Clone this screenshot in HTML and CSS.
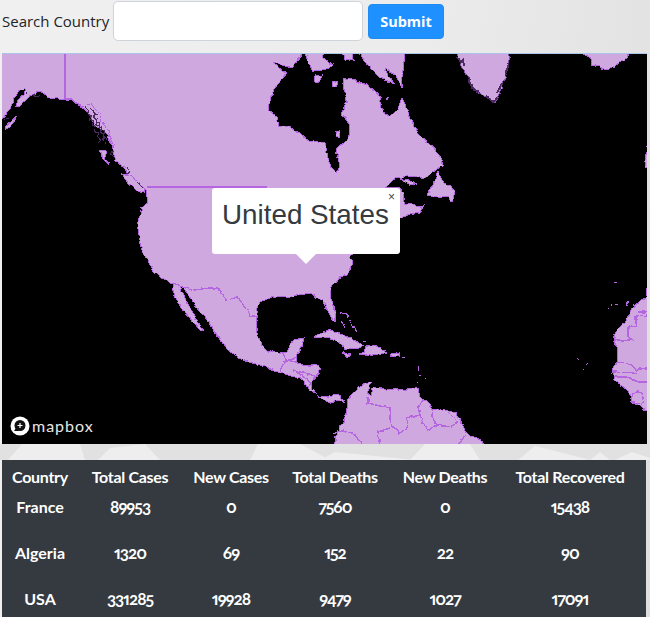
FILE: index.html
```html
<!DOCTYPE html>
<html lang="en">
<head>
    <meta charset="UTF-8">
    <meta name="viewport" content="width=device-width, initial-scale=1.0">
    <title>Covid Map</title>
    <link rel="stylesheet" href="styles.css">
</head>
<body>
    <form class="search">
        <label for="country">Search Country</label>
        <input type="text" id="country">
        <button type="button">Submit</button>
    </form>

    <div class="map">
        <svg class="land" viewBox="2 54 645 390" width="645" height="390">
            <defs>
                <filter id="rough" filterUnits="userSpaceOnUse" x="-10" y="40" width="680" height="420" color-interpolation-filters="sRGB">
                    <feTurbulence type="fractalNoise" baseFrequency="0.16" numOctaves="2" seed="4"/>
                    <feDisplacementMap in="SourceGraphic" scale="4" xChannelSelector="R" yChannelSelector="G"/>
                </filter>
            </defs>
            <g filter="url(#rough)">
            <!-- north america -->
            <path class="coast" d="M-8 44 L304 44 L302 54 L298 60 L292 68 L285 66 L273 62 L279 68 L287 73 L282 79 L276 86 L271 96 L268 110 L273 114 L277 116 L279 126 L286 126 L294 130 L301 134 L310 141 L325 143 L327 152 L328 160 L332 168 L337 173 L340 166 L338 158 L336 149 L344 143 L350 134 L349 124 L343 115 L342 112 L346 103 L347 95 L343 88 L343 80 L352 79 L367 85 L375 91 L380 97 L381 108 L385 113 L390 117 L397 110 L402 98 L408 112 L415 128 L420 136 L430 145 L436 150 L442 160 L442 166 L435 170 L424 178 L412 176 L394 178 L390 184 L385 187 L400 188 L403 192 L403 198 L405 204 L412 203 L417 207 L424 205 L420 212 L410 214 L402 217 L396 222 L390 235 L370 245 L350 255 L353 263 L347 273 L338 280 L331 287 L330 297 L334 306 L336 315 L334 322 L329 313 L322 300 L316 297 L310 293 L300 295 L290 297 L280 297 L270 298 L262 301 L258 305 L257 317 L256 325 L257 334 L262 345 L268 351 L278 353 L287 353 L290 345 L294 340 L303 338 L302 345 L297 353 L296 362 L303 365 L317 365 L321 369 L313 380 L311 388 L320 397 L329 396 L332 395 L340 394 L345 404 L341 400 L335 400 L332 404 L322 399 L315 393 L308 388 L300 377 L293 377 L280 372 L260 365 L245 361 L230 352 L223 343 L217 335 L205 317 L198 310 L192 300 L185 290 L180 285 L183 295 L190 308 L198 322 L204 330 L201 331 L193 322 L185 312 L178 303 L172 288 L172 283 L160 277 L153 270 L146 258 L141 248 L140 240 L138 230 L140 215 L142 208 L146 204 L147 198 L146 190 L140 188 L133 182 L127 172 L122 165 L115 160 L113 148 L108 135 L103 130 L95 125 L92 120 L88 112 L80 106 L73 100 L66 100 L50 98 L42 92 L36 93 L30 96 L20 106 L16 106 L18 100 L24 95 L25 89 L18 92 L12 104 L7 112 L4 118 L-8 122 Z"/>
            <!-- arctic and atlantic islands -->
            <path class="coast" d="M305 44 L305 54 L313 72 L330 68 L333 65 L323 57 L325 44 Z"/>
            <path class="coast" d="M342 44 L352 44 L354 60 L345 60 Z"/>
            <path class="coast" d="M357 44 L403 44 L403 70 L402 88 L398 80 L392 72 L385 68 L388 76 L395 84 L380 78 L372 70 L364 62 Z"/>
            <path class="coast" d="M315 76 L322 75 L320 81 L314 82 Z M333 81 L338 81 L336 87 L333 86 Z M335 131 L340 132 L339 137 L335 136 Z M386 97 L389 97 L387 100 Z"/>
            <path class="coast" d="M427 195 L433 184 L438 172 L441 178 L444 183 L451 186 L455 193 L452 202 L447 197 L440 197 L433 196 Z"/>
            <path class="coast" d="M400 179 L408 179 L415 184 L409 184 Z"/>
            <path class="coast dark" d="M458 44 L458 54 L462 68 L467 76 L472 88 L478 93 L487 96 L495 103 L498 96 L501 89 L505 78 L510 62 L507 44 Z"/>
            <path class="coast" d="M583 44 L583 54 L592 58 L591 65 L600 67 L607 70 L617 64 L627 58 L628 44 Z"/>
            <path class="coast" d="M656 146 L646 148 L647 156 L645 166 L656 170 Z"/>
            <!-- alaska and bc coast clutter -->
            <path class="coast" d="M6 130 L14 122 L16 116 L11 122 L5 127 Z"/>
            <path class="coast" d="M99 150 L106 150 L105 158 L109 165 L103 159 Z"/>
            <path class="coast" d="M122 174 L130 175 L136 180 L143 187 L144 192 L137 190 L128 183 Z"/>
            <path class="clutter" d="M85 107 l4 4 l-2 3 l5 2 l-3 4 l5 1 l-2 4 l5 2 l-3 4 l5 2 l-2 4 l4 3 l-3 3 M90 108 l5 5 l-2 4 l4 2 l-1 5 l6 3 l-2 5 l4 3 l-2 5 M93 112 l5 5 l-2 4 l4 2 l-1 5 l6 3 l-2 5 l4 3 l-2 5 M114 151 l-4 3 l5 3 M127 168 l3 4 l-4 1 M33 94 l4 3 l3 -2 M28 92 l-2 3 M5 120 l3 -2 M137 183 l6 5"/>
            <path class="wall" d="M86 104 l5 -1 l3 5 l6 6 l2 8 l5 7 l4 10 l3 8 M70 99 l8 6 l6 2"/>
            <path class="dark-edge" d="M458 56 l3 6 l2 -2 l1 6 M468 78 l3 7 l4 6 l5 2 M486 96 l7 6 l3 -3 M497 93 l4 -8 l3 -2 M505 76 l3 -9 l1 -5"/>
            <!-- caribbean -->
            <path class="coast" d="M313 338 L322 332 L330 330 L338 333 L350 338 L363 345 L355 348 L345 348 L342 344 L330 338 L320 337 Z"/>
            <path class="coast" d="M365 346 L372 345 L381 349 L387 352 L378 355 L371 354 L368 356 L360 354 L366 352 Z"/>
            <path class="coast" d="M343 352 L351 355 L347 358 Z M391 353 L399 353 L399 356 L391 356 Z"/>
            <path class="dots" d="M340 313 L346 313 L348 318 M342 322 L345 328 M349 320 L357 332 M363 341 L365 341 M402 357 L404 357 M416 359 L416 360 M418 366 L418 370 M419 374 L419 376 M417 382 L417 386 M425 377 L426 377 M406 388 L418 388"/>
            <!-- south america -->
            <path class="coast" d="M332 455 L336 436 L340 428 L347 413 L347 400 L352 394 L358 388 L365 384 L372 382 L369 388 L367 393 L371 396 L373 388 L377 387 L386 389 L397 390 L407 389 L418 388 L420 397 L427 403 L433 408 L445 410 L457 413 L461 420 L463 427 L467 435 L477 438 L500 455 Z"/>
            <path class="border" d="M368 397 L368 403 L380 406 L390 408 L390 423 L400 433 L408 427 L407 418 L420 415 L423 423 L427 430 L437 425 L450 427 L458 422 L448 412 M433 408 L432 417 L437 425 M420 415 L418 407 L423 400 M390 428 L378 432 L380 448 M333 433 L340 430 L355 435 L365 448 M457 448 L465 435"/>
            <!-- africa -->
            <path class="coast" d="M660 280 L647 287 L646 297 L632 308 L625 323 L618 328 L613 340 L617 347 L617 362 L612 370 L615 380 L627 390 L632 400 L647 412 L660 418 Z"/>
            <path class="border" d="M613 340 L632 340 L628 337 L628 327 L636 325 L636 316 L650 315 M638 312 L650 312 M617 362 L632 365 L637 370 L650 367 M613 372 L637 373 M615 377 L628 377 L638 382 L650 382"/>
            <circle class="border" cx="637" cy="398" r="6"/>
            <path class="dots" d="M614 282 L617 282 M611 304 L611 306 M608 308 L610 308 M615 305 L618 304 M620 307 L621 308 M626 306 L629 301 M577 359 L579 359 M587 363 L588 364 M584 369 L585 370"/>
            <path class="border" d="M172 283 L195 290 L210 288 L218 288 L227 300 L238 297 L250 315 L258 317 M283 353 L286 360 L296 362 M280 371 L284 362 L296 358 M293 370 L315 376 M297 372 L310 382 M308 387 L320 372 M311 388 L316 393"/>
            </g>
            <!-- straight borders stay straight -->
            <path class="border" d="M65 50 L65 99 L72 99 M147 187 L267 187"/>
        </svg>

        <div class="popup">
            <button type="button" class="popup-close">×</button>
            <h3>United States</h3>
        </div>

        <div class="logo">
            <svg viewBox="0 0 20 20" width="20" height="20">
                <circle cx="10" cy="10" r="9.5" fill="#fff"/>
                <circle cx="10" cy="9.5" r="5.5" fill="#111"/>
                <path d="M4 15 L9 15 L6 12 Z" fill="#111"/>
                <path d="M10 7 V12 M7.5 9.5 H12.5" stroke="#fff" stroke-width="1.2"/>
            </svg>
            <span>mapbox</span>
        </div>
    </div>

    <div class="strip">
        <svg viewBox="0 0 650 16" width="650" height="16">
            <path class="facet" d="M8 16 L22 0 L80 0 L85 16 Z"/>
            <path class="facet" d="M98 16 L110 4 L145 0 L160 16 Z"/>
            <path class="facet" d="M250 16 L258 0 L300 0 L330 16 Z"/>
            <path class="facet" d="M320 16 L335 8 L415 16 Z"/>
            <path class="facet" d="M410 16 L425 0 L470 0 L480 16 Z"/>
            <path class="facet" d="M518 16 L535 2 L575 12 L590 16 Z"/>
            <path class="facet" d="M590 16 L600 8 L610 16 Z"/>
            <path class="facet" d="M615 16 L632 8 L650 14 L650 16 Z"/>
        </svg>
    </div>

    <table class="stats">
        <colgroup>
            <col class="c1"><col class="c2"><col class="c3"><col class="c4"><col class="c5"><col class="c6">
        </colgroup>
        <tr>
            <th>Country</th>
            <th>Total Cases</th>
            <th>New Cases</th>
            <th>Total Deaths</th>
            <th>New Deaths</th>
            <th>Total Recovered</th>
        </tr>
        <tr>
            <td>France</td><td class="num">89953</td><td class="num">0</td><td class="num">7560</td><td class="num">0</td><td class="num">15438</td>
        </tr>
        <tr>
            <td>Algeria</td><td class="num">1320</td><td class="num">69</td><td class="num">152</td><td class="num">22</td><td class="num">90</td>
        </tr>
        <tr>
            <td>USA</td><td class="num">331285</td><td class="num">19928</td><td class="num">9479</td><td class="num">1027</td><td class="num">17091</td>
        </tr>
    </table>
</body>
</html>
```

FILE: styles.css
```css
*{
    box-sizing: border-box;
}
html, body{
    height: 617px;
    overflow: hidden;
}
body{
    margin: 0;
    background: linear-gradient(100deg, #f0f0f0 0%, #ececec 55%, #dfdfdf 100%);
    font-family: "Open Sans", "Noto Sans", sans-serif;
    color: #212529;
}
.search{
    display: flex;
    align-items: center;
    height: 40px;
    margin-top: 1px;
    margin-bottom: 12px;
    padding-left: 2px;
}
.search label{
    width: 111px;
    font-size: 15px;
}
.search input{
    width: 250px;
    height: 40px;
    border: 1px solid #ced4da;
    border-radius: 5px;
    background: #fff;
}
.search button{
    width: 76px;
    height: 35px;
    margin-left: 5px;
    border: 1px solid #1e8cf0;
    border-radius: 4px;
    background-color: #1e90ff;
    color: #fff;
    font-family: "Open Sans", sans-serif;
    font-size: 14.5px;
    font-weight: 700;
}
.map{
    position: relative;
    width: 645px;
    height: 391px;
    margin-left: 2px;
    border-top: 1px solid #a9c6ea;
    background: #000;
    overflow: hidden;
}
.land{
    display: block;
    shape-rendering: crispEdges;
}
.coast{
    fill: #cea8de;
    stroke: #b565e0;
    stroke-width: 1;
}
.dark{
    stroke: #8a4fb0;
}
.border{
    fill: none;
    stroke: #b565e0;
    stroke-width: 1.4;
}
.clutter{
    fill: none;
    stroke: #4a2a60;
    stroke-width: 1;
}
.wall{
    fill: none;
    stroke: #b565e0;
    stroke-width: 1;
}
.dark-edge{
    fill: none;
    stroke: #4a2a60;
    stroke-width: 2;
}
.dots{
    fill: none;
    stroke: #b565e0;
    stroke-width: 1;
}
.popup{
    position: absolute;
    left: 210px;
    top: 134px;
    width: 188px;
    height: 66px;
    padding: 15px 10px 0;
    border-radius: 3px;
    background: #fff;
}
.popup::after{
    content: "";
    position: absolute;
    left: 84px;
    top: 66px;
    border-top: 10px solid #fff;
    border-left: 10px solid transparent;
    border-right: 10px solid transparent;
}
.popup h3{
    margin: 0;
    font-family: "Liberation Sans", Arial, sans-serif;
    font-size: 27.8px;
    font-weight: 400;
    line-height: 24px;
    white-space: nowrap;
    color: #343a40;
}
.popup-close{
    position: absolute;
    right: 5px;
    top: 5px;
    height: 9px;
    padding: 0;
    border: none;
    background: none;
    color: #444;
    font-family: "Liberation Sans", Arial, sans-serif;
    font-size: 12px;
    line-height: 9px;
}
.logo{
    position: absolute;
    left: 8px;
    bottom: 8px;
    display: flex;
    align-items: center;
    gap: 2px;
    color: #e8e8e8;
}
.logo span{
    margin-top: -2px;
    font-family: "Lato", sans-serif;
    font-size: 16px;
    letter-spacing: 1px;
}
.strip{
    height: 16px;
    background: #e1e1e1;
}
.strip svg{
    display: block;
}
.facet{
    fill: #eeeeee;
}
.stats{
    width: 644px;
    margin-left: 2px;
    border-collapse: collapse;
    table-layout: fixed;
    background-color: #343a40;
    color: #fff;
    font-family: "Lato", sans-serif;
    font-size: 16px;
    font-weight: 700;
    text-align: center;
}
.stats th{
    height: 33px;
    padding: 0;
    font-weight: 700;
    letter-spacing: -0.3px;
}
.stats td{
    height: 46px;
    padding: 0 0 20px;
}
.stats th:last-child, .stats td:last-child{
    padding-right: 6px;
}
.stats .num{
    font-size: 17px;
    font-variant-numeric: oldstyle-nums proportional-nums;
    letter-spacing: -1px;
}
.c1{ width: 76px; }
.c2{ width: 104px; }
.c3{ width: 98px; }
.c4{ width: 110px; }
.c5{ width: 110px; }
.c6{ width: 146px; }
```
